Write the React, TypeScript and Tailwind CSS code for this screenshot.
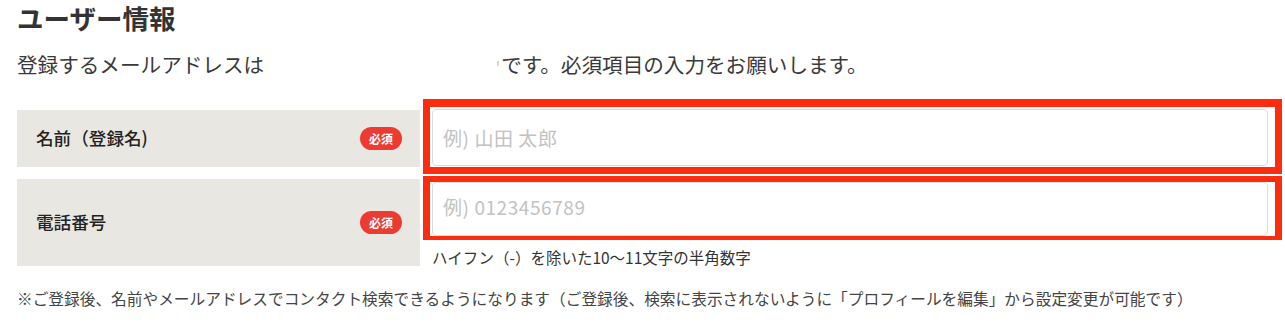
import React from 'react'

const jp = "font-['Noto_Sans_CJK_JP','Noto_Sans',sans-serif]"

function RequiredBadge() {
  return (
    <span className="flex h-[23px] w-[42px] items-center justify-center rounded-full bg-[#ec3b32] text-[12px] font-bold leading-none text-white">
      必須
    </span>
  )
}

export default function App() {
  return (
    <div className={`${jp} min-h-[331px] w-[1285px] bg-white pl-[17px] text-[#333]`}>
      <h1 className="h-[35px] text-[26.5px] font-bold leading-[35px] text-[#333]">ユーザー情報</h1>

      <p className="mt-[15px] flex items-center text-[20.6px] leading-[28px] text-[#3a3a3a]">
        <span>登録するメールアドレスは</span>
        <span className="relative inline-block h-[28px] w-[237px]">
          <span className="absolute right-[2px] top-[11px] h-[5px] w-[2px] bg-[#d6d6d6]" />
        </span>
        <span>です。必須項目の入力をお願いします。</span>
      </p>

      {/* 名前 */}
      <div className="mt-[32px] flex items-start gap-[12px]">
        <div className="flex h-[57px] w-[403px] items-center justify-between bg-[#e8e7e2] pl-[19px] pr-[18px]">
          <span className="text-[17.6px] font-medium text-[#222]">名前（登録名)</span>
          <RequiredBadge />
        </div>
        <div className="relative -mt-[1px] w-[836px]">
          <input
            type="text"
            placeholder="例) 山田 太郎"
            className={`${jp} h-[57px] w-full rounded-[4px] border border-[#dcdcdc] bg-white px-[10px] text-[19px] tracking-[0.03em] outline-none placeholder:text-[#c2c2c2]`}
          />
          <div className="pointer-events-none absolute -bottom-[8px] -left-[9px] -right-[14px] -top-[10px] border-[7px] border-t-[8px] border-[#fb2d0e]" />
        </div>
      </div>

      {/* 電話番号 */}
      <div className="mt-[12px] flex items-start gap-[12px]">
        <div className="flex h-[87px] w-[403px] items-center justify-between bg-[#e8e7e2] pl-[19px] pr-[18px]">
          <span className="text-[17.6px] font-medium text-[#222]">電話番号</span>
          <RequiredBadge />
        </div>
        <div className="mt-[3px] w-[836px]">
          <div className="relative">
            <input
              type="tel"
              placeholder="例) 0123456789"
              className={`${jp} h-[54px] w-full rounded-[4px] border border-[#dcdcdc] bg-white px-[10px] pb-[5px] text-[19px] tracking-[0.03em] outline-none placeholder:text-[#c2c2c2]`}
            />
            <div className="pointer-events-none absolute -bottom-[4px] -left-[9px] -right-[14px] -top-[6px] border-[7px] border-b-[4px] border-t-[6px] border-[#fb2d0e]" />
          </div>
          <p className="mt-[11px] text-[15.5px] leading-[20px] text-[#333]">
            ハイフン（-）を除いた10〜11文字の半角数字
          </p>
        </div>
      </div>

      <p className="mt-[20px] text-[15.7px] leading-[24px] text-[#444]">
        ※ご登録後、名前やメールアドレスでコンタクト検索できるようになります（ご登録後、検索に表示されないように「プロフィールを編集」から設定変更が可能です）
      </p>
    </div>
  )
}
